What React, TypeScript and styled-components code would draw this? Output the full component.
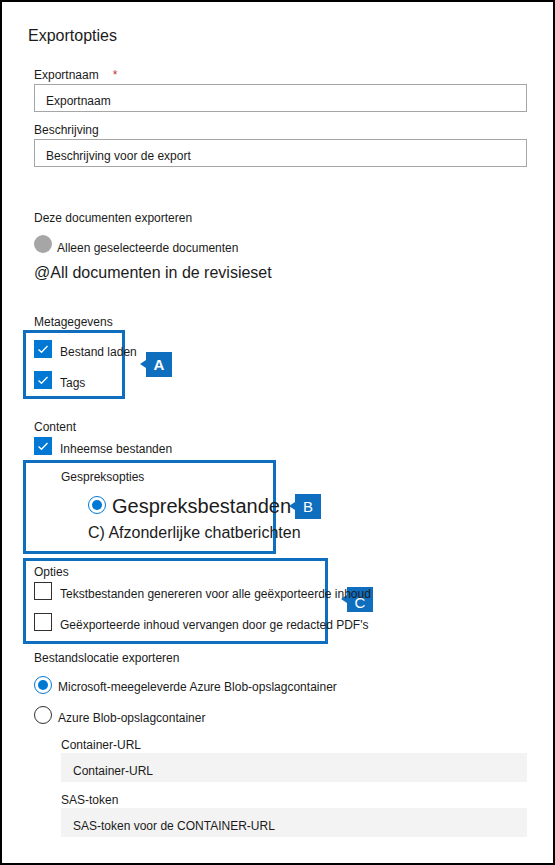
import React from "react";
import styled, { createGlobalStyle } from "styled-components";

const GlobalStyle = createGlobalStyle`
  html, body { margin: 0; padding: 0; background: #fff; }
  body { font-family: "Liberation Sans", Arial, sans-serif; color: #1b1b1b; }
  * { box-sizing: border-box; }
`;

const BLUE = "#0078d4";
const NOTE = "#106ebe";

const Frame = styled.div`
  width: 555px;
  height: 865px;
  border: 2px solid #000;
  padding: 0 26px;
  background: #fff;
  overflow: hidden;
`;

const Title = styled.h1`
  margin: 23px 0 0 0;
  font-size: 16px;
  line-height: 20px;
  padding-top: 1px;
  height: 20px;
  font-weight: normal;
`;

const Form = styled.div`
  display: flex;
  flex-direction: column;
  margin-left: 6px;
`;

const Label = styled.div<{ $mt: number; $indent?: number }>`
  margin-top: ${(p) => p.$mt}px;
  margin-left: ${(p) => p.$indent ?? 0}px;
  font-size: 12px;
  line-height: 16px;
  height: 16px;
  padding-top: 1px;
  white-space: nowrap;
`;

const Required = styled.span`
  color: #c4314b;
  margin-left: 14px;
  font-size: 12px;
`;

const TextInput = styled.div<{ $mt: number }>`
  margin-top: ${(p) => p.$mt}px;
  height: 28px;
  border: 1px solid #a6a6a6;
  padding: 5px 11px 0;
  display: flex;
  align-items: center;
  font-size: 12px;
  line-height: 16px;
`;

const GreyInput = styled.div<{ $mt: number }>`
  margin-top: ${(p) => p.$mt}px;
  margin-left: 27px;
  height: 29px;
  background: #f3f3f3;
  padding: 6px 12px 0;
  display: flex;
  align-items: center;
  font-size: 12px;
  line-height: 16px;
`;

const Row = styled.div<{ $mt: number; $indent?: number; $gap?: number; $h?: number }>`
  position: relative;
  margin-top: ${(p) => p.$mt}px;
  margin-left: ${(p) => p.$indent ?? 0}px;
  display: flex;
  align-items: ${(p) => (p.$h ? "center" : "flex-start")};
  gap: ${(p) => p.$gap ?? 8}px;
  height: ${(p) => p.$h ?? 18}px;
  white-space: nowrap;
`;

const RowText = styled.span<{ $top?: number }>`
  font-size: 12px;
  line-height: 16px;
  margin-top: ${(p) => p.$top ?? 4}px;
`;

const BigText = styled.div<{ $mt: number; $indent?: number; $size: number }>`
  position: relative;
  margin-top: ${(p) => p.$mt}px;
  margin-left: ${(p) => p.$indent ?? 0}px;
  font-size: ${(p) => p.$size}px;
  line-height: ${(p) => p.$size + 4}px;
  white-space: nowrap;
`;

const DisabledDot = styled.span`
  width: 18px;
  height: 18px;
  border-radius: 50%;
  background: #a6a6a6;
  flex: none;
`;

const Radio = styled.span<{ $on?: boolean }>`
  width: 18px;
  height: 18px;
  border-radius: 50%;
  border: 1px solid ${(p) => (p.$on ? BLUE : "#323130")};
  flex: none;
  display: flex;
  align-items: center;
  justify-content: center;
  background: #fff;
  &::after {
    content: "";
    width: 10px;
    height: 10px;
    border-radius: 50%;
    background: ${(p) => (p.$on ? BLUE : "transparent")};
  }
`;

const Box = styled.span<{ $on?: boolean }>`
  width: 18px;
  height: 18px;
  flex: none;
  background: ${(p) => (p.$on ? BLUE : "#fff")};
  border: 1px solid ${(p) => (p.$on ? BLUE : "#323130")};
  display: flex;
  align-items: center;
  justify-content: center;
`;

const Note = styled.div<{ $mt: number; $w: number; $h: number; $pt: number }>`
  position: relative;
  margin-top: ${(p) => p.$mt}px;
  margin-left: -11px;
  width: ${(p) => p.$w}px;
  height: ${(p) => p.$h}px;
  border: 3px solid ${NOTE};
  padding: ${(p) => p.$pt}px 0 0 8px;
  display: flex;
  flex-direction: column;
`;

const Callout = styled.div<{ $left: number; $top: number; $bold?: boolean; $low?: boolean }>`
  position: absolute;
  left: ${(p) => p.$left}px;
  top: ${(p) => p.$top}px;
  width: 26px;
  height: 25px;
  background: ${NOTE};
  color: #fff;
  font-size: 15px;
  font-weight: ${(p) => (p.$bold ? "bold" : "normal")};
  display: flex;
  align-items: center;
  justify-content: center;
  padding-top: ${(p) => (p.$low ? 6 : 0)}px;
  &::before {
    content: "";
    position: absolute;
    left: -6px;
    top: 8px;
    border-top: 4px solid transparent;
    border-bottom: 4px solid transparent;
    border-right: 6px solid ${NOTE};
  }
`;

const Check = () => (
  <svg width="12" height="12" viewBox="0 0 12 12">
    <polyline points="1.5,6.5 4.5,9.3 10.5,3" fill="none" stroke="#fff" strokeWidth="1.3" />
  </svg>
);

const CheckRow = ({ on, text, mt }: { on?: boolean; text: string; mt: number }) => (
  <Row $mt={mt}>
    <Box $on={on}>{on && <Check />}</Box>
    <RowText>{text}</RowText>
  </Row>
);

export default function App() {
  return (
    <>
      <GlobalStyle />
      <Frame>
        <Title>Exportopties</Title>
        <Form>
          <Label $mt={21}>
            Exportnaam<Required>*</Required>
          </Label>
          <TextInput $mt={2}>Exportnaam</TextInput>
          <Label $mt={9}>Beschrijving</Label>
          <TextInput $mt={2}>Beschrijving voor de export</TextInput>

          <Label $mt={42}>Deze documenten exporteren</Label>
          <Row $mt={10} $gap={5}>
            <DisabledDot />
            <RowText $top={5}>Alleen geselecteerde documenten</RowText>
          </Row>
          <BigText $mt={10} $size={16}>@All documenten in de revisieset</BigText>

          <Label $mt={30}>Metagegevens</Label>
          <Note $mt={1} $w={102} $h={69} $pt={7}>
            <Callout $left={120} $top={19} $bold>A</Callout>
            <CheckRow on text="Bestand laden" mt={0} />
            <CheckRow on text="Tags" mt={13} />
          </Note>

          <Label $mt={19}>Content</Label>
          <CheckRow on text="Inheemse bestanden" mt={3} />
          <Note $mt={5} $w={253} $h={94} $pt={5}>
            <Callout $left={269} $top={31}>B</Callout>
            <Label $mt={0} $indent={27}>Gespreksopties</Label>
            <Row $mt={9} $indent={54} $gap={6} $h={24}>
              <Radio $on />
              <BigText $mt={1} $size={20}>Gespreksbestanden</BigText>
            </Row>
            <BigText $mt={6} $indent={54} $size={16}>C) Afzonderlijke chatberichten</BigText>
          </Note>

          <Note $mt={4} $w={305} $h={86} $pt={2}>
            <Callout $left={321} $top={26} $low>C</Callout>
            <Label $mt={0}>Opties</Label>
            <CheckRow text="Tekstbestanden genereren voor alle geëxporteerde inhoud" mt={3} />
            <CheckRow text="Geëxporteerde inhoud vervangen door ge redacted PDF's" mt={13} />
          </Note>

          <Label $mt={5}>Bestandslocatie exporteren</Label>
          <Row $mt={11} $gap={6}>
            <Radio $on />
            <RowText $top={3}>Microsoft-meegeleverde Azure Blob-opslagcontainer</RowText>
          </Row>
          <Row $mt={12} $gap={6}>
            <Radio />
            <RowText>Azure Blob-opslagcontainer</RowText>
          </Row>
          <Label $mt={12} $indent={27}>Container-URL</Label>
          <GreyInput $mt={1}>Container-URL</GreyInput>
          <Label $mt={9} $indent={27}>SAS-token</Label>
          <GreyInput $mt={1}>SAS-token voor de CONTAINER-URL</GreyInput>
        </Form>
      </Frame>
    </>
  );
}
